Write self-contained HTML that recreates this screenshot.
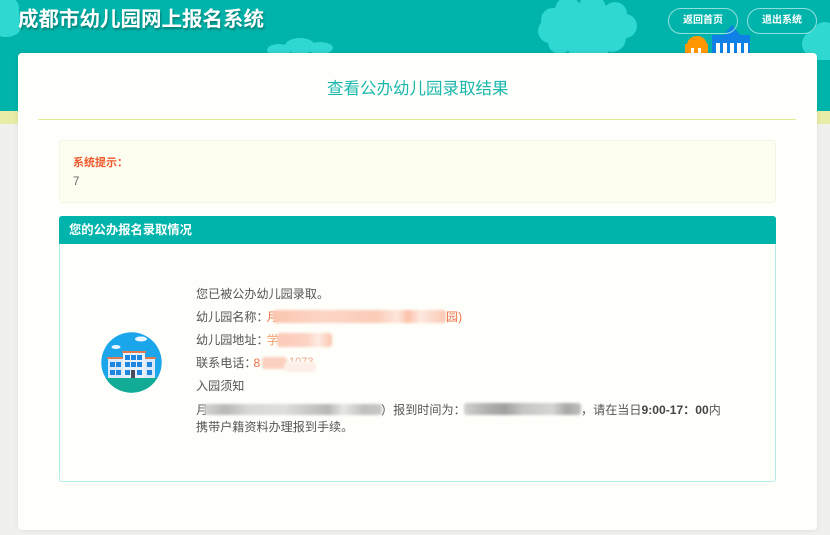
<!DOCTYPE html>
<html lang="zh">
<head>
<meta charset="utf-8">
<title>成都市幼儿园网上报名系统</title>
<style>
html,body{margin:0;padding:0}
body{width:830px;height:535px;overflow:hidden;position:relative;background:#f0f1ed;font-family:"Liberation Sans","Noto Sans CJK SC",sans-serif;color:#555}
.a{position:absolute;white-space:nowrap}
.t{font-size:12.1px;line-height:16px;color:#555}
.btn{position:absolute;top:8px;height:24px;width:68px;border:1px solid #8fe0dc;border-radius:13px;color:#fff;font-size:10px;font-weight:bold;line-height:24px;text-align:center}
.r{position:absolute;filter:blur(1.2px);border-radius:3px}
</style>
</head>
<body>
<div class="a" style="left:0;top:0;width:830px;height:111px;background:#00b4ab"></div>
<div class="a" style="left:0;top:111px;width:830px;height:13px;background:#e9eca6"></div>

<svg class="a" style="left:0;top:0" width="830" height="60" viewBox="0 0 830 60">
  <g fill="#30d8d2">
    <circle cx="2" cy="18" r="18"/><circle cx="8" cy="8" r="11"/><ellipse cx="6" cy="27" rx="15" ry="10"/>
    <ellipse cx="279" cy="50" rx="12" ry="6"/><ellipse cx="300" cy="46" rx="15" ry="8"/><ellipse cx="320" cy="48" rx="13" ry="6"/>
    <ellipse cx="587" cy="28" rx="42" ry="25"/>
    <circle cx="553" cy="20" r="12"/><circle cx="550" cy="31" r="12"/><circle cx="568" cy="10" r="13"/><circle cx="592" cy="9" r="14"/><circle cx="615" cy="14" r="12"/><circle cx="625" cy="26" r="12"/><circle cx="612" cy="38" r="14"/><circle cx="580" cy="42" r="15"/><circle cx="560" cy="42" r="12"/><circle cx="598" cy="44" r="13"/>
    <circle cx="815" cy="44" r="13"/><circle cx="825" cy="35" r="13"/><circle cx="828" cy="52" r="13"/>
  </g>
  <path d="M685 53V44H687C688 39 692 36 697 36C702 36 706 39 707 44H708V53Z" fill="#ff9800"/>
  <rect x="691" y="48" width="3" height="5" fill="#fff"/><rect x="698" y="48" width="3" height="5" fill="#fff"/>
  <path d="M712 53V35H724L732 25L740 35H750V53Z" fill="#0f80e6"/>
  <g fill="#fff"><rect x="716" y="43" width="4" height="10"/><rect x="723" y="43" width="4" height="10"/><rect x="730" y="43" width="4" height="10"/><rect x="737" y="43" width="4" height="10"/><rect x="744" y="43" width="4" height="10"/></g>
</svg>

<div class="a" style="left:18px;top:7px;font-size:20.5px;line-height:26px;font-weight:bold;color:#fff;text-shadow:1px 2px 2px rgba(0,80,70,.55)">成都市幼儿园网上报名系统</div>
<div class="btn" style="left:668px">返回首页</div>
<div class="btn" style="left:747px">退出系统</div>

<div class="a" style="left:18px;top:53px;width:799px;height:477px;background:#fefffa;border-radius:4px;box-shadow:0 0 6px rgba(0,0,0,.08)"></div>
<div class="a" style="left:327px;top:78px;font-size:16.5px;line-height:22px;color:#1cb8ae">查看公办幼儿园录取结果</div>
<div class="a" style="left:38px;top:119px;width:758px;height:1px;background:#e2ea94"></div>

<div class="a" style="left:59px;top:140px;width:715px;height:61px;background:#fdfdf0;border:1px solid #f3f4e6;border-radius:3px"></div>
<div class="a" style="left:73px;top:155px;font-size:11px;line-height:16px;font-weight:bold;color:#f0592b">系统提示：</div>
<div class="a" style="left:73px;top:174px;font-size:11.5px;line-height:16px;color:#666">7</div>

<div class="a" style="left:59px;top:216px;width:715px;height:264px;border:1px solid #b4ecea;border-radius:3px"></div>
<div class="a" style="left:59px;top:216px;width:717px;height:28px;background:#00b4ab;border-radius:3px 3px 0 0"></div>
<div class="a" style="left:69px;top:222px;font-size:12.3px;line-height:16px;font-weight:bold;color:#fff">您的公办报名录取情况</div>

<svg class="a" style="left:101px;top:332px" width="61" height="61" viewBox="0 0 61 61">
  <defs><clipPath id="c"><circle cx="30.5" cy="30.5" r="30.2"/></clipPath></defs>
  <g clip-path="url(#c)">
    <rect width="61" height="61" fill="#1ba5ea"/>
    <rect y="46" width="61" height="15" fill="#12ab95"/>
    <ellipse cx="40" cy="7" rx="6" ry="2.5" fill="#e8f6ff"/>
    <ellipse cx="15" cy="15" rx="4.5" ry="2" fill="#e8f6ff"/>
    <rect x="7" y="27" width="47" height="19" fill="#dce9fa"/>
    <rect x="6" y="25" width="49" height="2" fill="#e07a50"/>
    <rect x="22" y="21" width="22" height="25" fill="#e8f1fc"/>
    <rect x="21" y="19" width="24" height="2" fill="#e07a50"/>
    <g fill="#1f86e0">
      <rect x="24" y="23" width="5" height="5"/><rect x="30" y="23" width="5" height="5"/><rect x="36" y="23" width="5" height="5"/>
      <rect x="24" y="30" width="5" height="5"/><rect x="30" y="30" width="5" height="5"/><rect x="36" y="30" width="5" height="5"/>
      <rect x="9" y="30" width="5" height="5"/><rect x="15" y="30" width="5" height="5"/><rect x="46" y="30" width="5" height="5"/>
      <rect x="9" y="38" width="5" height="5"/><rect x="15" y="38" width="5" height="5"/><rect x="24" y="38" width="5" height="5"/><rect x="36" y="38" width="5" height="5"/><rect x="46" y="38" width="5" height="5"/>
    </g>
    <rect x="30" y="38" width="4" height="8" fill="#4a4a5c"/>
  </g>
</svg>

<div class="a t" style="left:196px;top:286px">您已被公办幼儿园录取。</div>
<div class="a t" style="left:196px;top:309px">幼儿园名称：<span style="color:#f0704a;margin-left:-2px">月</span></div>
<div class="r" style="left:273px;top:310px;width:173px;height:13px;background:linear-gradient(90deg,#fbc6b0,#fcd5c5 30%,#fbcbb7 60%,#fde6dc 72%,#fbc0a8 78%,#fde9e0 85%,#fbc8b2)"></div>
<div class="a t" style="left:446px;top:309px;color:#f0704a">园)</div>
<div class="a t" style="left:196px;top:332px">幼儿园地址：<span style="color:#f0a070;margin-left:-2px">学</span></div>
<div class="r" style="left:277px;top:333px;width:55px;height:14px;background:linear-gradient(90deg,#fcc9b6,#fcd3c4 55%,#fdebe3 75%,#fbc5ae)"></div>
<div class="a t" style="left:196px;top:355px">联系电话：<span style="color:#f0704a;margin-left:-3px">8</span></div>
<div class="a" style="left:289px;top:356px;font-size:11px;line-height:12px;height:6px;overflow:hidden;color:#f2a58a">1073</div>
<div class="r" style="left:262px;top:357px;width:25px;height:12px;background:#fcd0bf"></div>
<div class="r" style="left:284px;top:362px;width:32px;height:10px;background:#fdeee8"></div>
<div class="a t" style="left:196px;top:378px">入园须知</div>
<div class="a t" style="left:196px;top:402px;color:#555">月</div>
<div class="r" style="left:204px;top:404px;width:178px;height:11px;background:linear-gradient(90deg,#d4d4d2,#b8b8b6 12%,#d8d8d6 25%,#dededc 45%,#c6c6c4 60%,#b8b8b6 70%,#e6e6e4 78%,#c0c0be 90%,#c8c8c6)"></div>
<div class="a t" style="left:381px;top:402px">）报到时间为：</div>
<div class="r" style="left:464px;top:403px;width:117px;height:12px;background:linear-gradient(90deg,#d0d0ce,#b0b0ae 20%,#a0a09e 35%,#c4c4c2 50%,#d6d6d4 75%,#a8a8a6 88%,#c0c0be)"></div>
<div class="a t" style="left:581px;top:402px">，请在当日<b style="color:#444">9:00-17：00</b>内</div>
<div class="a t" style="left:196px;top:419px">携带户籍资料办理报到手续。</div>
</body>
</html>
